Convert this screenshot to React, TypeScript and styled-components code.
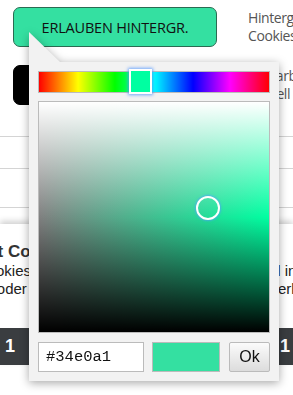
import styled, { createGlobalStyle } from 'styled-components';

const GlobalStyle = createGlobalStyle`
  html, body {
    margin: 0;
    padding: 0;
    background: #fff;
    overflow: hidden;
  }
  body {
    font-family: 'Open Sans', 'Liberation Sans', sans-serif;
  }
`;

const Page = styled.div`
  position: relative;
  width: 293px;
  height: 395px;
  overflow: hidden;
  background: #fff;
`;

const Settings = styled.div`
  display: grid;
  gap: 18px;
  padding: 7px 0 0 13px;
`;

const SettingRow = styled.div`
  display: flex;
  align-items: center;
  gap: 31px;
  height: 40px;
`;

const ActionButton = styled.button<{ $dark?: boolean }>`
  flex: none;
  width: 204px;
  height: 40px;
  border-radius: 7px;
  border: 1px solid ${(p) => (p.$dark ? '#000' : '#2b6b52')};
  background: ${(p) => (p.$dark ? '#000' : '#34e0a1')};
  color: ${(p) => (p.$dark ? '#fff' : '#111')};
  font-family: 'Open Sans', 'Liberation Sans', sans-serif;
  font-size: 14.5px;
  letter-spacing: -0.2px;
  padding: 0;
`;

const SettingText = styled.div`
  font-family: 'Open Sans', 'Liberation Sans', sans-serif;
  font-size: 14px;
  letter-spacing: -0.4px;
  line-height: 18px;
  color: #555;
  white-space: nowrap;
`;

const List = styled.div`
  margin-top: 31px;
  display: grid;
`;

const ListRow = styled.div<{ $h: number }>`
  height: ${(p) => p.$h}px;
  border-top: 1px solid #d4d4d4;
`;

const Banner = styled.div`
  margin-top: 16px;
  background: #fff;
  box-shadow: 0 -3px 6px rgba(0, 0, 0, 0.18);
  padding-top: 18px;
  font-family: 'Liberation Sans', Arial, sans-serif;
  color: #222;
`;

const BannerTitle = styled.div`
  margin-left: -79px;
  font-weight: bold;
  font-size: 17px;
  line-height: 20px;
  color: #333;
  white-space: nowrap;
`;

const BannerLine = styled.div`
  display: grid;
  grid-template-columns: 31px 222px 1fr;
  font-size: 15px;
  line-height: 18px;
  white-space: nowrap;

  &:first-of-type {
    margin-top: 7px;
  }
`;

const LeadText = styled.span`
  display: flex;
  justify-content: flex-end;
`;

const TailText = styled.span`
  grid-column: 3;
`;

const Pager = styled.div`
  margin-top: 30px;
  height: 37px;
  background: #3a3d40;
  display: flex;
  align-items: center;
  justify-content: space-between;
  padding: 0 3px 0 5px;
  color: #fff;
  font-family: 'Liberation Sans', Arial, sans-serif;
  font-weight: bold;
  font-size: 18px;
`;

const Picker = styled.div`
  position: absolute;
  left: 29px;
  top: 62px;
  width: 232px;
  padding: 9px;
  background: #f2f2f2;
  display: grid;
  gap: 8px;
  filter: drop-shadow(0 2px 5px rgba(0, 0, 0, 0.35));

  &::before {
    content: '';
    position: absolute;
    left: 0;
    top: -30px;
    width: 31px;
    height: 30px;
    background: #f2f2f2;
    clip-path: polygon(0 0, 0 100%, 100% 100%);
  }
`;

const HueBar = styled.div`
  position: relative;
  height: 20px;
  border: 1px solid #bbb;
  background: linear-gradient(
    to right,
    #f00 0%,
    #ff0 17%,
    #0f0 33%,
    #0ff 50%,
    #00f 67%,
    #f0f 83%,
    #f00 100%
  );
`;

const HueHandle = styled.div`
  position: absolute;
  top: -3px;
  width: 19px;
  height: 21px;
  border: 2px solid #fff;
  box-shadow: 0 0 3px 1px rgba(80, 150, 255, 0.8);
`;

const SatArea = styled.div`
  position: relative;
  height: 230px;
  border: 1px solid #bbb;
`;

const SatHandle = styled.div`
  position: absolute;
  width: 20px;
  height: 20px;
  margin: -12px 0 0 -12px;
  border: 2px solid #fff;
  border-radius: 50%;
  box-shadow: 0 0 2px 1px rgba(80, 160, 255, 0.7);
`;

const Controls = styled.div`
  display: flex;
  height: 30px;
  margin-top: 1px;
`;

const HexInput = styled.input`
  box-sizing: border-box;
  width: 106px;
  height: 30px;
  border: 1px solid #bbb;
  background: #fff;
  padding: 0 0 0 7px;
  font-family: 'Liberation Mono', 'Courier New', monospace;
  font-size: 15.5px;
  color: #111;
  outline: none;
`;

const Swatch = styled.div<{ $color: string }>`
  box-sizing: border-box;
  width: 68px;
  height: 30px;
  margin-left: 8px;
  border: 1px solid #bbb;
  background: ${(p) => p.$color};
`;

const OkButton = styled.button`
  box-sizing: border-box;
  width: 41px;
  height: 30px;
  margin-left: 9px;
  border: 1px solid #bbb;
  border-radius: 2px;
  background: linear-gradient(#fbfbfb, #dcdcdc);
  font-family: 'Liberation Sans', Arial, sans-serif;
  font-size: 16px;
  color: #111;
  padding: 0;
`;

const color = '#34e0a1';
const hue = 158;
const sat = 0.735;
const light = 0.54;

const App = () => {
  const pure = `hsl(${hue}, 100%, 50%)`;
  return (
    <>
      <GlobalStyle />
      <Page>
        <Settings>
          <SettingRow>
            <ActionButton>ERLAUBEN HINTERGR.</ActionButton>
            <SettingText>
              Hintergrund
              <br />
              Cookies
            </SettingText>
          </SettingRow>
          <SettingRow>
            <ActionButton $dark>ABLEHNEN</ActionButton>
            <SettingText>
              Tonfarbe
              <br />
              Modell
            </SettingText>
          </SettingRow>
        </Settings>

        <List>
          <ListRow $h={31} />
          <ListRow $h={38} />
          <ListRow $h={0} />
        </List>

        <Banner>
          <BannerTitle>Akzeptiert Cookies</BannerTitle>
          <BannerLine>
            <LeadText>Wir nutzen Cookies</LeadText>
            <TailText>Tool in</TailText>
          </BannerLine>
          <BannerLine>
            <LeadText>Sie können dies oder&nbsp;</LeadText>
            <TailText>Zuverlässig</TailText>
          </BannerLine>
          <Pager>
            <span>1</span>
            <span>1</span>
          </Pager>
        </Banner>

        <Picker>
          <HueBar>
            <HueHandle style={{ left: `${(hue / 360) * 230 - 11}px`, background: pure }} />
          </HueBar>
          <SatArea
            style={{
              background: `linear-gradient(to bottom, #fff, rgba(255,255,255,0) 50%, rgba(0,0,0,0) 50%, #000), linear-gradient(to right, #808080, ${pure})`,
            }}
          >
            <SatHandle style={{ left: `${sat * 230}px`, top: `${(1 - light) * 230}px` }} />
          </SatArea>
          <Controls>
            <HexInput defaultValue={color} />
            <Swatch $color={color} />
            <OkButton>Ok</OkButton>
          </Controls>
        </Picker>
      </Page>
    </>
  );
};

export default App;
